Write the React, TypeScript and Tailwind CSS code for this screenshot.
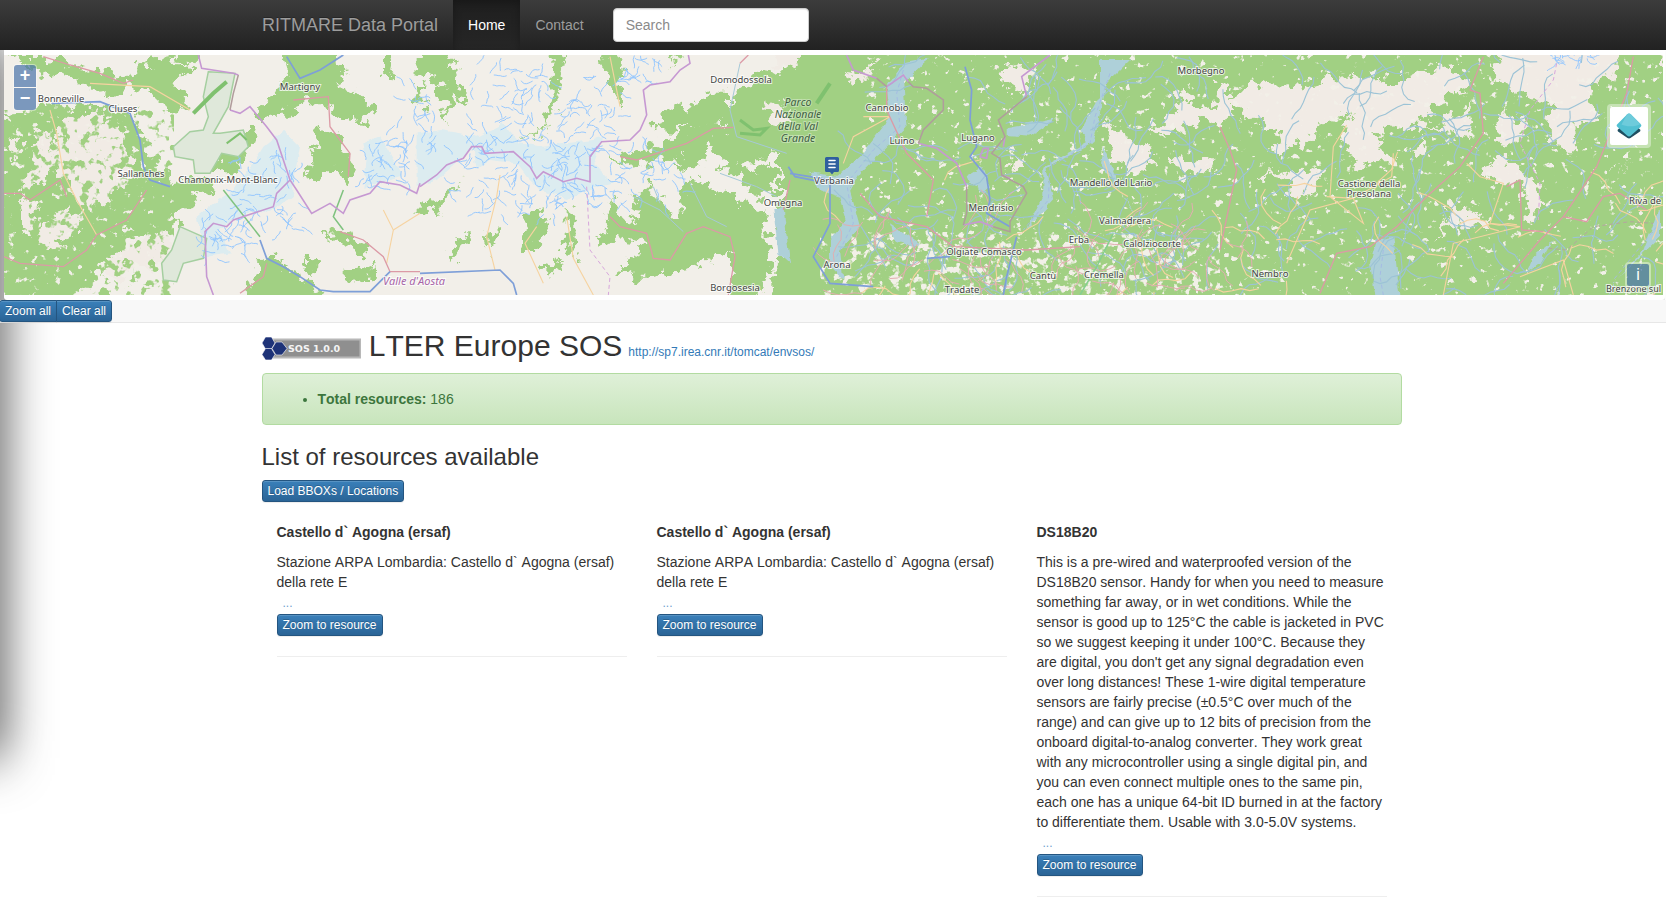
const z = (ox: number, s: string) =>
  s
    .trim()
    .split(/\s+/)
    .map((p) => {
      const [a, b] = p.split(",").map(Number);
      return `${ox + a / 3},${50 + b / 3}`;
    })
    .join(" ");

const A = 0;
const B = 420;
const C = 780;
const D = 1220;

const forests = [
  z(A, "20,15 130,15 210,45 290,60 390,85 450,30 520,15 560,60 520,100 570,180 520,190 450,120 400,110 380,130 300,140 250,100 190,70 120,80 70,40"),
  z(A, "-20,210 60,200 90,180 150,170 230,165 330,180 390,190 420,230 440,290 470,340 520,390 600,380 660,400 600,440 540,480 520,540 430,560 380,540 360,600 330,640 250,720 160,780 -20,780"),
  z(A, "770,190 830,120 860,70 850,-10 1000,-10 1040,60 1010,110 1060,120 1130,190 1080,220 1000,190 980,160 900,160 860,200 800,200"),
  z(A, "960,230 1000,250 1040,310 1055,370 1030,400 1000,350 960,380 920,400 930,340"),
  z(A, "780,630 830,620 880,670 960,720 980,780 720,780"),
  z(A, "1040,670 1130,650 1120,690 1040,700"),
  z(A, "910,630 945,630 940,690"),
  z(A, "960,550 1030,545 1100,580 1120,610 1080,610 1000,570"),
  z(A, "1140,-10 1190,-10 1170,80 1140,70"),
  z(A, "1240,140 1270,90 1270,180"),
  z(A, "520,-10 620,-10 560,50"),
  z(A, "700,370 745,310 770,240 720,240 660,300 640,370"),
  z(B, "-10,20 80,-10 110,80 150,160 100,140 80,230 60,100 -10,60"),
  z(B, "400,-10 440,-10 420,100 400,190 360,260 310,260 370,240 390,160"),
  z(B, "550,-10 590,-10 610,120 605,180 580,110 550,70"),
  z(B, "750,-10 790,-10 760,50"),
  z(B, "700,235 750,160 780,170 820,180 870,125 930,125 930,220 830,230 760,240"),
  z(B, "570,320 620,305 700,290 780,250 860,220 920,230 930,180 960,110 1000,80 1140,60 1260,40 1300,400 1200,380 1100,310 1080,300 1010,340 950,340 1010,370 1040,340 1070,360 1060,440 1000,440 950,370 900,370 910,350 880,270 860,310 830,350 780,360 760,350 790,320 640,350"),
  z(B, "570,450 600,500 650,520 640,450 690,400 720,460 790,500 790,400 850,380 880,430 920,430 1000,470 1040,490 1040,540 1050,650 1000,780 940,780 930,650 930,600 820,660 700,680 620,680 600,650 660,610 670,570 600,560 530,600 560,520"),
  z(B, "80,630 130,550 150,550 120,620"),
  z(B, "330,490 370,480 390,550 340,600 310,600 320,540"),
  z(B, "-10,470 70,440 140,390 70,470 -10,500"),
  z(B, "350,630 410,640 420,660 380,670"),
  z(B, "440,460 465,500 470,620 440,620"),
  z(B, "200,545 245,540 210,610"),
  z(B, "1140,-10 1280,-10 1280,50 1150,50"),
  z(B, "1110,380 1160,390 1200,450 1280,450 1280,780 1060,780 1060,650 1110,640 1110,500"),
  z(C, "60,-20 1370,-20 1370,780 0,780 0,80"),
  z(D, "0,-20 1400,-20 1400,780 0,780"),
];

const clearings = [
  z(A, "185,195 300,190 360,220 390,320 410,380 350,420 300,470 250,480 220,440 170,380 150,340 170,260"),
  z(A, "20,270 60,260 70,300 30,330"),
  z(A, "110,240 150,230 160,330 130,390 100,410 60,420 100,340"),
  z(A, "130,520 200,470 240,520 220,570 150,600 100,560"),
  z(A, "340,610 440,560 520,540 520,650 440,640 350,700 330,660"),
  z(A, "60,440 110,460 110,540 70,560"),
  z(B, "1040,150 1100,170 1100,230 1060,230"),
  z(C, "200,60 240,65 290,35 270,85 210,90"),
  z(C, "-20,-20 60,-20 70,30 0,50 -20,50"),
  z(C, "640,60 700,45 760,60 745,120 700,130 690,100"),
  z(C, "1200,110 1240,160 1370,190 1330,220 1240,215 1170,260 1090,240 1190,190"),
  z(C, "975,210 1020,240 1110,300 1130,340 1070,370 1000,330"),
  z(C, "1180,320 1290,330 1310,370 1200,370"),
  z(C, "700,300 740,350 690,370"),
  z(D, "30,150 130,95 200,110 280,100 330,90 400,80 500,90 560,90 600,60 700,50 730,90 740,130 640,160 600,230 500,240 450,260 380,260 350,230 420,190 320,210 250,280 160,310 180,260 100,200 40,170"),
  z(D, "840,-20 1200,-20 1190,80 1120,110 1100,150 1140,210 1060,230 1070,310 1040,310 980,240 1000,170 900,130 810,90"),
  z(D, "830,190 920,210 880,280 830,270"),
  z(D, "820,310 880,340 960,400 950,520 920,520 910,400 850,410 790,370"),
  z(D, "700,450 810,520 680,530 640,580"),
  z(D, "580,280 630,260 600,330"),
  z(D, "380,250 450,240 520,340 430,340 420,370 380,320"),
  z(D, "660,220 760,170 750,270 600,220"),
  z(D, "100,370 300,360 290,420 230,440 190,390"),
  z(D, "1140,380 1250,330 1180,360"),
  z(D, "1300,-20 1340,-20 1340,60"),
  z(D, "-10,100 30,110 30,190 -10,190"),
];

const lakes = [
  z(C, "320,110 370,40 450,25 430,40 370,100 380,230 320,290 240,370 210,420 240,530 180,600 190,690 150,650 150,570 200,510 180,440 120,420 90,365 170,380 240,320 310,230 330,190"),
  z(C, "560,380 610,350 630,410 610,430 570,400"),
  z(C, "680,235 830,205 750,260 680,255"),
  z(C, "960,30 1050,30 980,100 960,190 940,280 800,355 820,450 740,540 790,440 790,350 920,280 905,240 960,140"),
  z(C, "970,290 1020,420 1100,560 1040,450 960,340"),
  z(C, "330,520 420,580 400,590 340,570"),
  z(B, "1060,480 1090,470 1110,640 1075,610"),
  z(D, "470,570 520,560 530,650 540,760 470,760 450,640"),
  z(D, "1320,470 1320,560 1180,700 1150,760 1190,690 1270,600"),
  z(D, "940,620 1000,570 960,640 920,670"),
];

const glaciers = [
  z(A, "790,290 850,240 900,290 880,400 880,440 800,490 770,480 700,510 660,540 690,610 620,620 590,500 640,460 700,420 760,340"),
  z(A, "1090,280 1140,260 1210,380 1130,400 1090,420 1100,330"),
  z(B, "-10,250 60,240 120,250 170,260 250,220 300,280 370,290 440,280 520,270 550,260 520,340 580,400 500,420 440,450 360,420 320,380 290,340 210,330 170,360 160,290 120,330 50,390 -10,410"),
];

// blue outlines around the ice, [page x, page y, spread x, spread y, count]
const iceAreas = [
  [275, 195, 40, 40, 50],
  [385, 165, 25, 25, 30],
  [415, 125, 22, 45, 30],
  [510, 175, 60, 40, 70],
  [515, 105, 45, 42, 60],
  [590, 115, 30, 40, 42],
  [615, 175, 70, 30, 70],
  [640, 70, 20, 15, 16],
  [1570, 58, 24, 6, 16],
  [225, 235, 25, 25, 30],
];

let seed = 20240;
const rnd = () => {
  seed = (seed * 16807) % 2147483647;
  return seed / 2147483647;
};

const walk = (x: number, y: number, steps: number, len: number) => {
  let a = rnd() * Math.PI * 2;
  const pts = [`${x.toFixed(1)},${y.toFixed(1)}`];
  for (let i = 0; i < steps; i++) {
    a += (rnd() - 0.5) * 1.3;
    x += Math.cos(a) * len;
    y += Math.sin(a) * len;
    pts.push(`${x.toFixed(1)},${y.toFixed(1)}`);
  }
  return pts.join(" ");
};

const iceBits: string[] = [];
iceAreas.forEach(([x, y, sx, sy, n]) => {
  for (let i = 0; i < n; i++) {
    iceBits.push(walk(x + (rnd() - 0.5) * 2 * sx, y + (rnd() - 0.5) * 2 * sy, 6, 2.2));
  }
});

const streams: string[] = [];
for (let i = 0; i < 230; i++) {
  streams.push(walk(860 + rnd() * 800, 60 + rnd() * 235, 7, 7));
}

const sideRoads: string[] = [];
for (let i = 0; i < 60; i++) {
  sideRoads.push(walk(820 + rnd() * 430, 215 + rnd() * 80, 5, 8));
}
const yellowRoads: string[] = [];
for (let i = 0; i < 46; i++) {
  yellowRoads.push(walk(830 + rnd() * 830, 180 + rnd() * 115, 5, 9));
}

const bigRivers = [
  z(A, "155,160 300,155 390,190 420,270 430,350 450,390 510,410"),
  z(A, "780,570 800,625 850,650 900,680 960,720 1000,725 1110,725 1170,665"),
  z(A, "860,20 900,85 960,60 1030,15"),
  z(B, "0,670 240,660 280,700 290,735"),
  z(B, "1105,350 1125,380 1200,395"),
  z(C, "555,50 575,120 570,210 590,290 570,320 620,380 630,450 620,490 690,530"),
  z(C, "710,560 680,680 670,735"),
  z(C, "30,370 150,390 150,520 100,620 150,700 280,710"),
  z(C, "440,625 510,620"),
];

const pinkRoads = [
  z(A, "12,430 60,430 90,450 180,390 200,440"),
  z(A, "440,420 380,510 290,555 260,600 190,650 60,640 12,620"),
  z(A, "130,20 210,45 300,70 370,100 400,90"),
  z(A, "880,150 985,140 990,230 1050,310 1045,380"),
  z(A, "1020,545 1090,570 1150,620 1170,665 1260,665"),
  z(A, "720,730 790,680 800,640"),
  z(B, "600,320 650,330 800,280 880,235 940,232"),
  z(B, "570,500 600,530 680,550 700,625 750,630 800,550 850,530 930,560 945,620 925,735"),
  z(B, "960,40 985,15"),
  z(B, "1110,390 1090,480"),
  z(C, "320,110 320,180 380,310 460,390 440,500"),
  z(C, "240,430 300,500 440,530 520,590 740,600 900,590"),
  z(D, "0,600 50,360 30,300 0,230"),
  z(D, "300,730 350,610 450,590 530,530 620,440 720,350 790,250 780,130 750,120 790,20"),
  z(D, "850,700 960,570 1030,500 1130,350 1220,130 1240,20"),
  z(D, "1030,500 1100,515 1150,440 1200,430 1280,480"),
  z(D, "860,410 900,390 905,540 970,545"),
];

const orangeRoads = [
  z(A, "150,180 170,250 190,370 230,450 290,555"),
  z(A, "1150,480 1180,540 1160,640"),
  z(A, "1180,540 1260,490"),
  z(A, "270,100 450,110 570,180"),
  z(B, "240,375 230,440 200,560 225,660"),
  z(B, "440,500 460,625 520,735"),
  z(B, "350,530 315,580 370,700"),
  z(B, "570,20 600,170"),
  z(C, "250,200 330,200 220,260 190,340"),
  z(D, "320,440 400,445 430,520 330,440 340,290 380,225"),
  z(D, "740,340 780,380 850,400 810,520 900,530 700,580 670,735"),
  z(D, "900,680 1030,630 1060,735"),
  z(D, "520,310 515,380 400,445 270,480 200,640"),
];

const purpleBorder = [
  z(A, "595,15 605,55 700,70 715,75"),
  z(A, "690,180 720,190 750,170 800,230 830,270 870,390 890,420 935,490 990,460 1030,490 1050,450 1110,430 1140,395 1200,405 1250,430 1260,400"),
  z(A, "870,390 830,430 820,470 760,490 700,510 680,530 640,520 615,545 620,680 640,735"),
  z(B, "0,410 50,375 80,345 130,325 155,290 185,290 195,310 280,305 330,350 350,385 370,365 430,395 470,385 510,395 510,320 545,275 630,270 660,240 680,195 670,120 690,105 750,95 780,60 810,40 805,15"),
  z(C, "200,15 220,60 290,85"),
  z(C, "320,110 370,75 385,95"),
  z(C, "415,280 470,295 530,340 560,410"),
  z(C, "550,525 600,515 640,530"),
  z(C, "610,295 625,295 620,325 600,320 610,295"),
  z(C, "675,260 670,290"),
  z(C, "665,375 690,385"),
  z(C, "740,140 725,80 810,15"),
];

const greyBorder = [
  z(A, "715,75 700,130 690,180"),
  z(C, "290,85 320,110"),
  z(C, "385,95 400,110 440,115 490,150 490,180 430,240 415,280"),
  z(C, "560,410 560,490 550,525"),
  z(C, "640,530 690,545 690,515 740,430 730,410 665,375 660,325 635,310 675,260 655,210 740,140"),
];

const labels: [string, number, number][] = [
  ["Bonneville", 61, 102],
  ["Cluses", 123, 112],
  ["Martigny", 300, 90],
  ["Sallanches", 141, 177],
  ["Chamonix-Mont-Blanc", 228, 183],
  ["Domodossola", 741, 83],
  ["Omegna", 783, 206],
  ["Verbania", 834, 184],
  ["Borgosesia", 735, 291],
  ["Arona", 837, 268],
  ["Cannobio", 887, 111],
  ["Luino", 902, 144],
  ["Lugano", 978, 141],
  ["Mendrisio", 991, 211],
  ["Olgiate Comasco", 984, 255],
  ["Tradate", 962, 293],
  ["Cantù", 1043, 279],
  ["Cremella", 1104, 278],
  ["Erba", 1079, 243],
  ["Valmadrera", 1125, 224],
  ["Calolziocorte", 1152, 247],
  ["Mandello del Lario", 1111, 186],
  ["Morbegno", 1201, 74],
  ["Castione della", 1369, 187],
  ["Presolana", 1369, 197],
  ["Nembro", 1270, 277],
];

const parkLabels: [string, number, number][] = [
  ["Parco", 798, 106],
  ["Nazionale", 798, 118],
  ["della Val", 798, 130],
  ["Grande", 798, 142],
];

const MapDrawing = () => (
  <svg viewBox="4 55 1659 240" className="block w-full h-full" preserveAspectRatio="none">
    <defs>
      <filter id="rough" x="-5%" y="-5%" width="110%" height="110%" colorInterpolationFilters="sRGB">
        <feTurbulence type="fractalNoise" baseFrequency="0.09" numOctaves="4" seed="7" result="n" />
        <feDisplacementMap in="SourceGraphic" in2="n" scale="26" xChannelSelector="R" yChannelSelector="G" />
      </filter>
      <filter id="wobble" x="-5%" y="-5%" width="110%" height="110%" colorInterpolationFilters="sRGB">
        <feTurbulence type="fractalNoise" baseFrequency="0.12" numOctaves="2" seed="3" result="n" />
        <feDisplacementMap in="SourceGraphic" in2="n" scale="6" xChannelSelector="R" yChannelSelector="G" />
      </filter>
      <filter id="flecks" x="0" y="0" width="100%" height="100%" colorInterpolationFilters="sRGB">
        <feTurbulence type="fractalNoise" baseFrequency="0.13" numOctaves="3" seed="11" />
        <feColorMatrix values="0 0 0 0 0.95 0 0 0 0 0.94 0 0 0 0 0.91 12 0 0 0 -8.1" />
      </filter>
      <filter id="town" x="0" y="0" width="100%" height="100%" colorInterpolationFilters="sRGB">
        <feTurbulence type="fractalNoise" baseFrequency="0.12" numOctaves="3" seed="5" />
        <feColorMatrix values="0 0 0 0 0.95 0 0 0 0 0.94 0 0 0 0 0.91 10 0 0 0 -5.6" />
      </filter>
      <filter id="greenbits" x="0" y="0" width="100%" height="100%" colorInterpolationFilters="sRGB">
        <feTurbulence type="fractalNoise" baseFrequency="0.1" numOctaves="3" seed="19" />
        <feColorMatrix values="0 0 0 0 0.63 0 0 0 0 0.816 0 0 0 0 0.51 12 0 0 0 -6.5" />
      </filter>
      <filter id="soft" x="0" y="0" width="100%" height="100%" colorInterpolationFilters="sRGB">
        <feGaussianBlur stdDeviation="0.45" />
      </filter>
    </defs>

    <g filter="url(#soft)">
      <rect x="0" y="50" width="1670" height="250" fill="#f2efe9" />
      <g fill="#dcecf0" filter="url(#wobble)">
        {glaciers.map((p, i) => (
          <polygon key={i} points={p} />
        ))}
      </g>
      <g fill="#a1d083" filter="url(#rough)">
        {forests.map((p, i) => (
          <polygon key={i} points={p} />
        ))}
      </g>
      <g fill="#f1ebe5" filter="url(#rough)">
        {clearings.map((p, i) => (
          <polygon key={i} points={p} />
        ))}
      </g>
      <rect x="4" y="110" width="170" height="185" filter="url(#greenbits)" />
      <rect x="4" y="100" width="170" height="195" filter="url(#flecks)" />
      <rect x="860" y="55" width="803" height="240" filter="url(#flecks)" />
      <rect x="820" y="232" width="400" height="63" filter="url(#town)" />

      <g fill="#dfe8da" stroke="#a5cfa0" strokeWidth="1.5">
        <polygon points={z(A, "625,65 705,70 685,170 640,250 660,250 730,240 745,290 715,320 665,310 630,370 585,370 580,330 525,320 520,290 570,245 610,240 625,200 610,140")} />
        <polygon points={z(A, "540,530 620,565 610,625 550,640 530,695 490,690 485,640 515,600")} />
      </g>
      <polyline points={z(A, "580,190 640,130 680,95")} fill="none" stroke="#7fc16f" strokeWidth="4" />
      <polyline points={z(A, "680,280 720,250 740,270")} fill="none" stroke="#7fc16f" strokeWidth="2" />
      <polyline points={z(B, "960,210 1000,240 1040,235 1020,255 960,250")} fill="none" stroke="#7fc16f" strokeWidth="3" />
      <polyline points={z(B, "1190,160 1230,100")} fill="none" stroke="#7fc16f" strokeWidth="4" />

      <g fill="#aed0d9" filter="url(#wobble)">
        {lakes.map((p, i) => (
          <polygon key={i} points={p} />
        ))}
      </g>
      <g fill="none" stroke="#a4b9e4" strokeWidth="0.9" strokeDasharray="4 3">
        <polyline points={z(C, "370,60 350,130 360,230 280,300 200,400 220,520 170,620")} />
        <polyline points={z(C, "990,70 945,200 930,280 810,350 805,450 730,540")} />
        <polyline points={z(D, "490,600 480,680 490,735")} />
        <polyline points={z(D, "1310,530 1180,690")} />
      </g>

      <g fill="none" stroke="#8fc4ff" strokeWidth="0.9">
        {iceBits.map((p, i) => (
          <polyline key={i} points={p} />
        ))}
      </g>
      <g fill="none" stroke="#9cc3d6" strokeWidth="1.1">
        {streams.map((p, i) => (
          <polyline key={i} points={p} />
        ))}
      </g>
      <g fill="none" stroke="#a6c9d8" strokeWidth="1">
        <polyline points={z(B, "640,440 720,480 790,545")} />
        <polyline points={z(B, "700,410 720,460")} />
        <polyline points={z(B, "810,400 860,500 920,530")} />
        <polyline points={z(B, "900,370 1010,410 1070,440")} />
        <polyline points={z(B, "960,40 930,180 950,260 1100,310")} />
      </g>
      <g fill="none" stroke="#f6d3a0" strokeWidth="1.1">
        {yellowRoads.map((p, i) => (
          <polyline key={i} points={p} />
        ))}
        {orangeRoads.map((p, i) => (
          <polyline key={i} points={p} />
        ))}
      </g>
      <g fill="none" stroke="#e2aeb0" strokeWidth="1">
        {sideRoads.map((p, i) => (
          <polyline key={i} points={p} />
        ))}
      </g>
      <g fill="none" stroke="#dc9aa6" strokeWidth="1.3">
        {pinkRoads.map((p, i) => (
          <polyline key={i} points={p} />
        ))}
      </g>
      <g fill="none" stroke="#7e9fd8" strokeWidth="1.7">
        {bigRivers.map((p, i) => (
          <polyline key={i} points={p} />
        ))}
      </g>
      <polyline points={z(A, "670,420 780,560")} fill="none" stroke="#7fc27f" strokeWidth="1.5" />
      <polyline points={z(A, "1030,420 1000,500 1030,540")} fill="none" stroke="#7fc27f" strokeWidth="1.5" />
      <polyline points={z(C, "900,735 950,650 1000,550")} fill="none" stroke="#86cf8e" strokeWidth="1.5" />
      <g fill="none" stroke="#c698d2" strokeWidth="1.6">
        {purpleBorder.map((p, i) => (
          <polyline key={i} points={p} />
        ))}
      </g>
      <g fill="none" stroke="#b09c9c" strokeWidth="1.5">
        {greyBorder.map((p, i) => (
          <polyline key={i} points={p} />
        ))}
      </g>
      <g fill="none" stroke="#d7a6dc" strokeWidth="1" strokeDasharray="4 3">
        <polyline points={z(B, "500,410 510,600 570,680 565,735")} />
        <polyline points={z(D, "1010,40 1000,90 930,180 900,280 960,400 955,510")} />
      </g>
      <polyline points={z(D, "985,595 1040,600 1120,530 1230,515 1300,520")} fill="none" stroke="#b5a5a0" strokeWidth="1" strokeDasharray="4 3" />
    </g>

    <g fontFamily="'Noto Sans', sans-serif" fontSize="9.5" textAnchor="middle" fill="#444" stroke="#fff" strokeWidth="2" strokeOpacity="0.75" style={{ paintOrder: "stroke" }}>
      {labels.map(([t, x, y]) => (
        <text key={t} x={x} y={y}>
          {t}
        </text>
      ))}
      <text x="1629" y="204" textAnchor="start">
        Riva de
      </text>
      <text x="1606" y="292" fontSize="9" textAnchor="start">
        Brenzone sul
      </text>
      <text x="414" y="285" fontSize="11" fontStyle="italic" fill="#a866a8">
        Valle d'Aosta
      </text>
      {parkLabels.map(([t, x, y]) => (
        <text key={t} x={x} y={y} fontSize="10.5" fontStyle="italic" fill="#3f5f44" strokeOpacity="0.35">
          {t}
        </text>
      ))}
    </g>

    {/* marker */}
    <path d="M826.5 157h11a1.5 1.5 0 0 1 1.5 1.5v12a1.5 1.5 0 0 1-1.5 1.5h-3.5l-2 2.5-2-2.5h-3.500a1.500 1.500 0 0 1-1.500-1.500v-12a1.500 1.500 0 0 1 1.500-1.500z" fill="#2f5f9e" />
    <g stroke="#fff" strokeWidth="1.6" strokeLinecap="round">
      <line x1="829" y1="160.500" x2="835" y2="160.500" />
      <line x1="829" y1="164" x2="835" y2="164" />
      <line x1="829" y1="167.500" x2="835" y2="167.500" />
    </g>
  </svg>
);

const LayersIcon = () => (
  <svg width="26" height="26" viewBox="0 0 26 26">
    <path d="M13 6l11 10.500a1.500 1.500 0 0 1 0 2l-9.500 6.500a3 3 0 0 1-3 0l-9.500-6.500a1.500 1.500 0 0 1 0-2z" fill="#1f4f61" />
    <path d="M11 1.500a3 3 0 0 1 4 0l9.500 9.500a2 2 0 0 1 0 3l-9.500 8.500a3 3 0 0 1-4 0l-9.500-8.500a2 2 0 0 1 0-3z" fill="#52c0d2" />
    <path d="M11 1.500a3 3 0 0 1 4 0l9.500 9.500c-5 3-14 3-19 0.500z" fill="#6ecbdb" />
  </svg>
);

const SosLogo = () => (
  <svg width="99" height="23" viewBox="0 0 99 23" className="inline align-middle">
    <rect x="9.500" y="2.500" width="89" height="18" fill="#8f8f8f" stroke="#b8b8b8" strokeWidth="2" />
    <g fill="#1e3378" stroke="#ffffff" strokeWidth="0.6">
      <polygon points="0,6 3.500,0 9.500,0 13,6 9.500,12 3.500,12" />
      <polygon points="0,17.500 3.500,11.500 9.500,11.500 13,17.500 9.500,23 3.500,23" />
      <polygon points="10,11.500 14,5 20,5 25,11.500 20,18 14,18" />
    </g>
    <text x="26" y="14.500" fontFamily="'DejaVu Sans', sans-serif" fontWeight="700" fontSize="9.500" fill="#f4f4f4">
      SOS 1.0.0
    </text>
  </svg>
);

const Btn = ({ children, className = "" }: { children: React.ReactNode; className?: string }) => (
  <button className={`h-[22px] px-[5px] text-[12px] leading-[18px] text-white border border-[#245580] rounded-[3px] bg-gradient-to-b from-[#3a80ba] to-[#2a6496] [text-shadow:0_-1px_0_rgba(0,0,0,0.2)] shadow-[inset_0_1px_0_rgba(255,255,255,0.15),0_1px_1px_rgba(0,0,0,0.075)] ${className}`}>
    {children}
  </button>
);

const resources = [
  {
    title: "Castello d` Agogna (ersaf)",
    text: "Stazione ARPA Lombardia: Castello d` Agogna (ersaf) della rete E",
  },
  {
    title: "Castello d` Agogna (ersaf)",
    text: "Stazione ARPA Lombardia: Castello d` Agogna (ersaf) della rete E",
  },
  {
    title: "DS18B20",
    text: "This is a pre-wired and waterproofed version of the DS18B20 sensor. Handy for when you need to measure something far away, or in wet conditions. While the sensor is good up to 125°C the cable is jacketed in PVC so we suggest keeping it under 100°C. Because they are digital, you don't get any signal degradation even over long distances! These 1-wire digital temperature sensors are fairly precise (±0.5°C over much of the range) and can give up to 12 bits of precision from the onboard digital-to-analog converter. They work great with any microcontroller using a single digital pin, and you can even connect multiple ones to the same pin, each one has a unique 64-bit ID burned in at the factory to differentiate them. Usable with 3.0-5.0V systems.",
  },
];

const App = () => {
  return (
    <div className="relative h-screen overflow-hidden bg-white font-['Liberation_Sans',Arial,sans-serif] text-[14px] leading-[20px] text-[#333] [font-kerning:none]">
      {/* sidebar shadow, the panel itself is off screen */}
      <div className="absolute left-[-40px] top-[40px] w-[40px] h-[718px] shadow-[0_0_50px_rgba(0,0,0,0.8)]" />

      <nav className="relative z-20 h-[50px] flex bg-gradient-to-b from-[#3c3c3c] to-[#222222] pl-[247px]">
        <a className="px-[15px] text-[18px] leading-[50px] text-[#9d9d9d] [text-shadow:0_-1px_0_rgba(0,0,0,0.25)]">
          RITMARE Data Portal
        </a>
        <a className="px-[15px] leading-[50px] text-white bg-gradient-to-b from-[#1f1f1f] to-[#262626] shadow-[inset_0_3px_9px_rgba(0,0,0,0.25)]">
          Home
        </a>
        <a className="px-[15px] leading-[50px] text-[#9d9d9d]">Contact</a>
        <input
          placeholder="Search"
          className="ml-[14px] mt-[8px] w-[196px] h-[34px] px-[12px] bg-white rounded-[4px] border border-[#cccccc] text-[14px] placeholder:text-[#8a8a8a] shadow-[inset_0_1px_1px_rgba(0,0,0,0.075)]"
        />
      </nav>

      <div className="relative z-10 ml-[4px] mr-px h-[250px] bg-white pt-[5px] pb-[4px] pr-[2px] rounded-b-[3px] shadow-[0_1px_1px_rgba(0,0,0,0.15)]">
        <div className="relative h-[240px] overflow-hidden">
          <MapDrawing />
          <div className="absolute left-[9px] top-[9px] w-[24px] rounded-[4px] bg-white/40 p-[1px]">
            <div className="h-[22px] rounded-t-[3px] bg-[#003c88]/50 text-white text-[18px] font-bold leading-[20px] text-center">+</div>
            <div className="h-[22px] mt-[1px] rounded-b-[3px] bg-[#003c88]/50 text-white text-[18px] font-bold leading-[20px] text-center">−</div>
          </div>
          <div className="absolute right-[12px] top-[49px] w-[44px] h-[44px] rounded-[4px] bg-white/40 p-[3px]">
            <div className="h-[38px] bg-white rounded-[2px] flex items-center justify-center">
              <LayersIcon />
            </div>
          </div>
          <div className="absolute right-[12px] top-[207px] w-[26px] h-[26px] rounded-[4px] bg-white/40 p-[2px]">
            <div className="h-[22px] rounded-[2px] bg-[#003c88]/50 text-white text-[16px] leading-[22px] text-center">i</div>
          </div>
        </div>
      </div>

      <div className="relative z-10 h-[23px] bg-[#f8f8f8] border-b border-[#e7e7e7] flex">
        <Btn className="rounded-r-none -ml-px">Zoom all</Btn>
        <Btn className="rounded-l-none -ml-px">Clear all</Btn>
      </div>

      <div className="relative ml-[261.5px] w-[1140px]">
        <h2 className="mt-[6px] h-[33px] text-[30px] leading-[33px] font-normal">
          <SosLogo /> LTER Europe SOS
          <a className="ml-[6px] text-[12px] text-[#337ab7]">http://sp7.irea.cnr.it/tomcat/envsos/</a>
        </h2>

        <div className="mt-[11px] h-[52px] px-[15px] pt-[15px] rounded-[4px] border border-[#b2dba1] bg-gradient-to-b from-[#dff0d8] to-[#c8e5bc] text-[#3c763d]">
          <ul className="pl-[40px] list-disc">
            <li>
              <b>Total resources:</b> 186
            </li>
          </ul>
        </div>

        <h3 className="mt-[19px] text-[24px] leading-[26px] font-normal">List of resources available</h3>
        <Btn className="mt-[10px] block">Load BBOXs / Locations</Btn>

        <div className="mt-[22px] grid grid-cols-3">
          {resources.map((r, i) => (
            <div key={i} className="px-[15px]">
              <h5 className="text-[14px] leading-[16px] font-bold">{r.title}</h5>
              <p className="mt-[12px]">{r.text}</p>
              <div className="h-[22px] pl-[6px] pt-[2px] text-[12px] leading-[18px] text-[#6f9fd0]">...</div>
              <Btn>Zoom to resource</Btn>
              <hr className="mt-[20px] border-[#eeeeee]" />
            </div>
          ))}
        </div>
      </div>
    </div>
  );
};

export default App;
